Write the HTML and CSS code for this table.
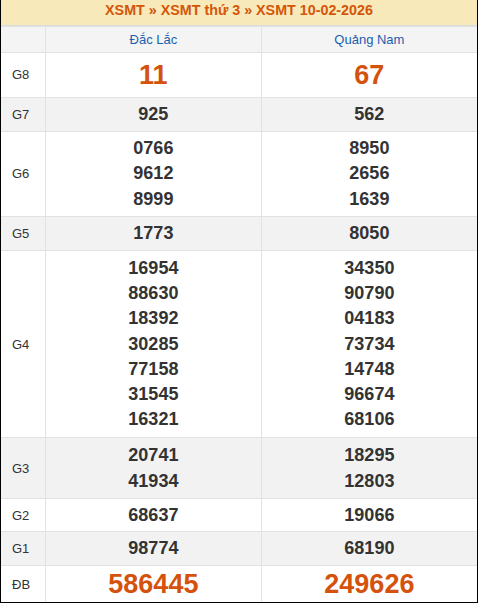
FILE: index.html
```html
<!DOCTYPE html>
<html lang="vi">
<head>
<meta charset="utf-8">
<link rel="stylesheet" href="styles.css">
</head>
<body>
<div class="box">
  <div class="title"><a>XSMT</a> » <a>XSMT thứ 3</a> » <a>XSMT 10-02-2026</a></div>
  <table class="kq">
    <thead>
      <tr><th class="lbl"></th><th>Đắc Lắc</th><th>Quảng Nam</th></tr>
    </thead>
    <tbody>
      <tr class="g8"><td class="lbl">G8</td><td class="big">11</td><td class="big">67</td></tr>
      <tr class="alt"><td class="lbl">G7</td><td>925</td><td>562</td></tr>
      <tr><td class="lbl">G6</td><td>0766<br>9612<br>8999</td><td>8950<br>2656<br>1639</td></tr>
      <tr class="alt"><td class="lbl">G5</td><td>1773</td><td>8050</td></tr>
      <tr class="g4"><td class="lbl">G4</td><td>16954<br>88630<br>18392<br>30285<br>77158<br>31545<br>16321</td><td>34350<br>90790<br>04183<br>73734<br>14748<br>96674<br>68106</td></tr>
      <tr class="alt g3"><td class="lbl">G3</td><td>20741<br>41934</td><td>18295<br>12803</td></tr>
      <tr class="g2"><td class="lbl">G2</td><td>68637</td><td>19066</td></tr>
      <tr class="alt"><td class="lbl">G1</td><td>98774</td><td>68190</td></tr>
      <tr class="db"><td class="lbl">ĐB</td><td class="big">586445</td><td class="big">249626</td></tr>
    </tbody>
  </table>
</div>
</body>
</html>
```
FILE: styles.css
```css
html, body {
  margin: 0;
  padding: 0;
  background: #fff;
}
.box {
  width: 478px;
  height: 603px;
  box-sizing: border-box;
  border: 1px solid #000;
  border-top: none;
  font-family: "Liberation Sans", Arial, sans-serif;
  overflow: hidden;
}
.title {
  height: 25px;
  line-height: 21px;
  background: #f7e9b9;
  border-bottom: 1px solid #dcdcdc;
  text-align: center;
  font-size: 14.3px;
  font-weight: bold;
  color: #d0540a;
  margin: 0 -1px;
}
.title a {
  color: #d4560a;
}
.kq {
  width: 100%;
  border-collapse: collapse;
  table-layout: fixed;
}
.kq th, .kq td {
  border: 1px solid #e2e2e2;
  text-align: center;
  padding: 4px 0;
}
.kq tr > :first-child { border-left: none; }
.kq tr > :last-child { border-right: none; }
.kq tbody tr:last-child td { border-bottom: none; }
.kq th {
  height: 17px;
  background: #f4f4f4;
  font-weight: normal;
  font-size: 13px;
  color: #1c5fae;
  line-height: 17px;
}
.kq th.lbl { width: 44px; }
.kq td {
  font-size: 18px;
  font-weight: bold;
  color: #333;
  line-height: 25.2px;
}
.kq td.lbl {
  font-size: 13px;
  font-weight: normal;
  color: #333;
  text-align: left;
  padding-left: 11px;
}
.kq tr.alt td { background: #f2f2f2; }
.kq tr.g8 td { height: 36px; }
.kq tr.g4 td { padding-top: 5px; padding-bottom: 5px; }
.kq tr.g3 td { padding-top: 5px; padding-bottom: 4px; }
.kq tr.g2 td { padding-bottom: 3px; }
.kq td.big {
  font-size: 27px;
  color: #d4520c;
  line-height: 28px;
}
.kq tr.db td {
  padding-top: 4px;
  padding-bottom: 4px;
}
```
